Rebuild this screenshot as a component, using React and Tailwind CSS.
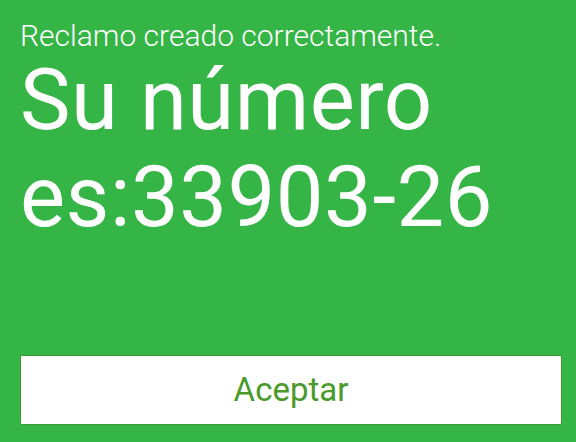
import React from 'react';

const App = () => {
  return (
    <div className="w-[576px] h-[442px] bg-[#34b545] flex flex-col pl-5 pr-[14px] font-['Roboto',sans-serif] text-white">
      <p className="mt-[18px] text-[30px] leading-[36px] font-light">Reclamo creado correctamente.</p>
      <h1 className="text-[85px] leading-[97px] -mt-[2px] tracking-[0.5px]">
        Su número es:33903-26
      </h1>
      <div className="flex-1" />
      <button className="mb-[17px] h-[70px] w-full bg-white border border-[#3c9a2f] rounded-[2px] text-[#4a9a2a] text-[33px]">
        Aceptar
      </button>
    </div>
  );
};

export default App;
